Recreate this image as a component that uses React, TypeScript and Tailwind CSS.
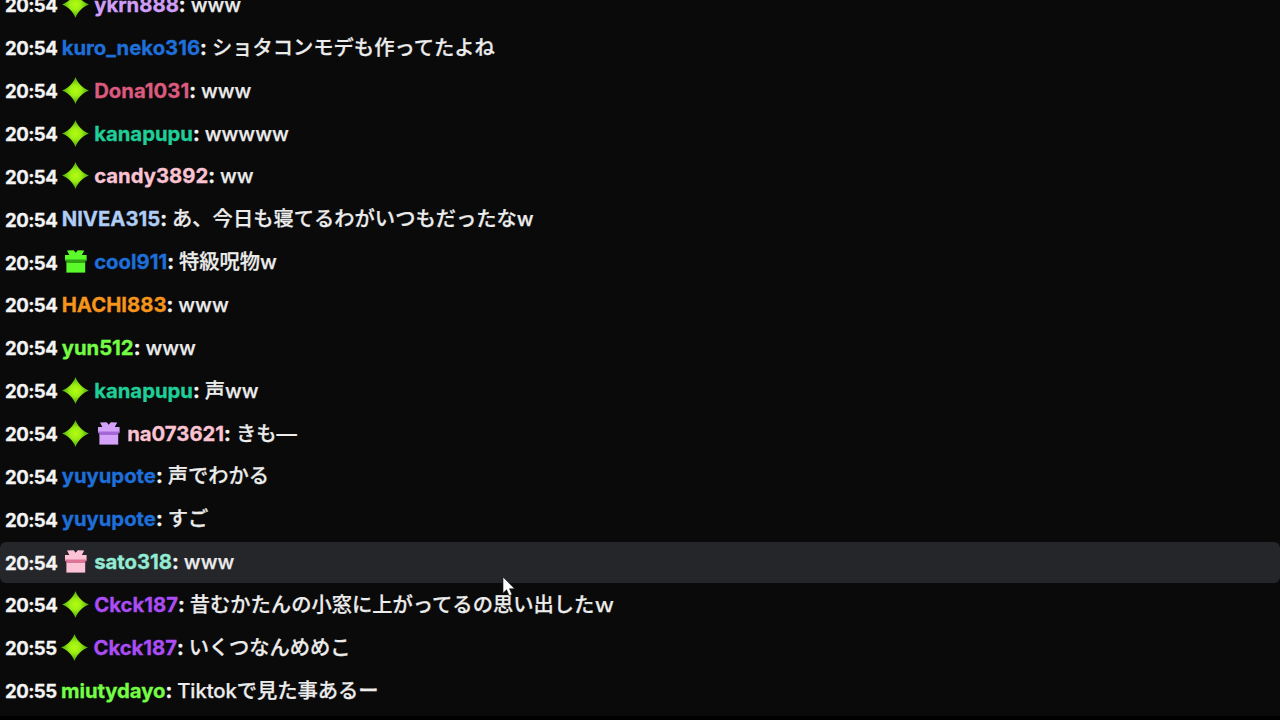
import { useId } from "react";
import clsx from "clsx";

type Badge = "star" | "giftGreen" | "giftPurple" | "giftPink";

type ChatMessage = {
  time: string;
  badges?: Badge[];
  user: string;
  color: string;
  text: string;
  hovered?: boolean;
};

const messages: ChatMessage[] = [
  { time: "20:54", badges: ["star"], user: "ykrn888", color: "text-[#cf9ff8]", text: "www" },
  { time: "20:54", user: "kuro_neko316", color: "text-[#1e6fd9]", text: "ショタコンモデも作ってたよね" },
  { time: "20:54", badges: ["star"], user: "Dona1031", color: "text-[#dc5a7e]", text: "www" },
  { time: "20:54", badges: ["star"], user: "kanapupu", color: "text-[#1fcf98]", text: "wwwww" },
  { time: "20:54", badges: ["star"], user: "candy3892", color: "text-[#fac3d2]", text: "ww" },
  { time: "20:54", user: "NIVEA315", color: "text-[#b0cdf5]", text: "あ、今日も寝てるわがいつもだったなw" },
  { time: "20:54", badges: ["giftGreen"], user: "cool911", color: "text-[#1e6fd9]", text: "特級呪物w" },
  { time: "20:54", user: "HACHI883", color: "text-[#f5951b]", text: "www" },
  { time: "20:54", user: "yun512", color: "text-[#75fd46]", text: "www" },
  { time: "20:54", badges: ["star"], user: "kanapupu", color: "text-[#1fcf98]", text: "声ww" },
  { time: "20:54", badges: ["star", "giftPurple"], user: "na073621", color: "text-[#fac3d2]", text: "きも—" },
  { time: "20:54", user: "yuyupote", color: "text-[#1e6fd9]", text: "声でわかる" },
  { time: "20:54", user: "yuyupote", color: "text-[#1e6fd9]", text: "すご" },
  { time: "20:54", badges: ["giftPink"], user: "sato318", color: "text-[#93ebd3]", text: "www", hovered: true },
  { time: "20:54", badges: ["star"], user: "Ckck187", color: "text-[#ab4df5]", text: "昔むかたんの小窓に上がってるの思い出したｗ" },
  { time: "20:55", badges: ["star"], user: "Ckck187", color: "text-[#ab4df5]", text: "いくつなんめめこ" },
  { time: "20:55", user: "miutydayo", color: "text-[#75fd46]", text: "Tiktokで見た事あるー" },
];

const GIFT_COLORS = {
  giftGreen: { box: "#5bfb2b", shade: "#2fa313" },
  giftPurple: { box: "#d5a2fa", shade: "#a468d6" },
  giftPink: { box: "#fcc2d6", shade: "#dc7596" },
};

function StarBadge() {
  const id = useId();
  return (
    <svg viewBox="0 0 27 27" className="size-[27px]">
      <defs>
        <radialGradient id={id}>
          <stop offset="0" stopColor="#b5fb12" />
          <stop offset="0.4" stopColor="#9df012" />
          <stop offset="1" stopColor="#48a30c" />
        </radialGradient>
      </defs>
      <path
        d="M13.5 0C15.6 6 20.5 11.1 27 13.5C20.5 15.9 15.6 21 13.5 27C11.4 21 6.5 15.9 0 13.5C6.5 11.1 11.4 6 13.5 0Z"
        fill={`url(#${id})`}
      />
    </svg>
  );
}

function GiftBadge({ kind }: { kind: keyof typeof GIFT_COLORS }) {
  const c = GIFT_COLORS[kind];
  return (
    <svg viewBox="0 0 27 27" className="size-[27px]">
      <path d="M5 2.6L11.6 2.2L13.7 4.8L15.8 2.2L22.2 2.6L19.6 7.4H7.6Z" fill={c.box} />
      <path d="M3 7H24.6V12.2H3Z" fill={c.box} />
      <path d="M4.4 14H23.2V24.6H4.4Z" fill={c.box} />
      <path d="M3 11.4H24.6V13.2H23.2V15H4.4V13.2H3Z" fill={c.shade} />
    </svg>
  );
}

function MessageRow({ message }: { message: ChatMessage }) {
  // the minute rollover rows sit slightly tighter
  const late = message.time === "20:55";
  return (
    <li
      className={clsx(
        "flex h-[40.87px] shrink-0 items-center rounded-md pl-[5px] whitespace-nowrap",
        message.hovered && "bg-[#25262a]",
        late && "tracking-[-0.05px]",
      )}
    >
      <span
        className={clsx(
          "pt-px text-[18.6px] font-bold tracking-[-0.55px] text-[#f4f4f4] [-webkit-text-stroke:0.3px]",
          late ? "w-[56px]" : "w-[56.7px]",
        )}
      >
        {message.time}
      </span>
      {message.badges && (
        <span className="mr-[5.5px] -mt-px flex gap-[6px]">
          {message.badges.map((b) => (b === "star" ? <StarBadge key={b} /> : <GiftBadge key={b} kind={b} />))}
        </span>
      )}
      <span className={clsx("font-bold [-webkit-text-stroke:0.3px]", message.color)}>{message.user}</span>
      <span className="mr-[5px] font-bold text-[#f4f4f4] [-webkit-text-stroke:0.4px]">:</span>
      <span className="font-medium text-[#ececec] [-webkit-text-stroke:0.25px]">{message.text}</span>
    </li>
  );
}

function Cursor() {
  return (
    <svg viewBox="0 0 14 21" className="absolute top-[576px] left-[502px] h-[21px] w-[14px]">
      <path d="M1 1V17.2L4.6 13.8L7.2 19.8L10 18.6L7.5 12.8H12.6Z" fill="#fff" stroke="#111" strokeWidth="0.6" />
    </svg>
  );
}

export default function App() {
  return (
    <div
      lang="ja"
      className="relative flex h-[720px] w-[1280px] flex-col overflow-hidden border-b-4 border-black bg-[#0a0a0a] font-['Inter','Noto_Sans_CJK_JP',sans-serif] text-[20.3px] leading-[30px]"
    >
      <ul className="-mt-[15.5px] flex flex-col gap-[2px]">
        {messages.map((m, i) => (
          <MessageRow key={i} message={m} />
        ))}
      </ul>
      <Cursor />
    </div>
  );
}
